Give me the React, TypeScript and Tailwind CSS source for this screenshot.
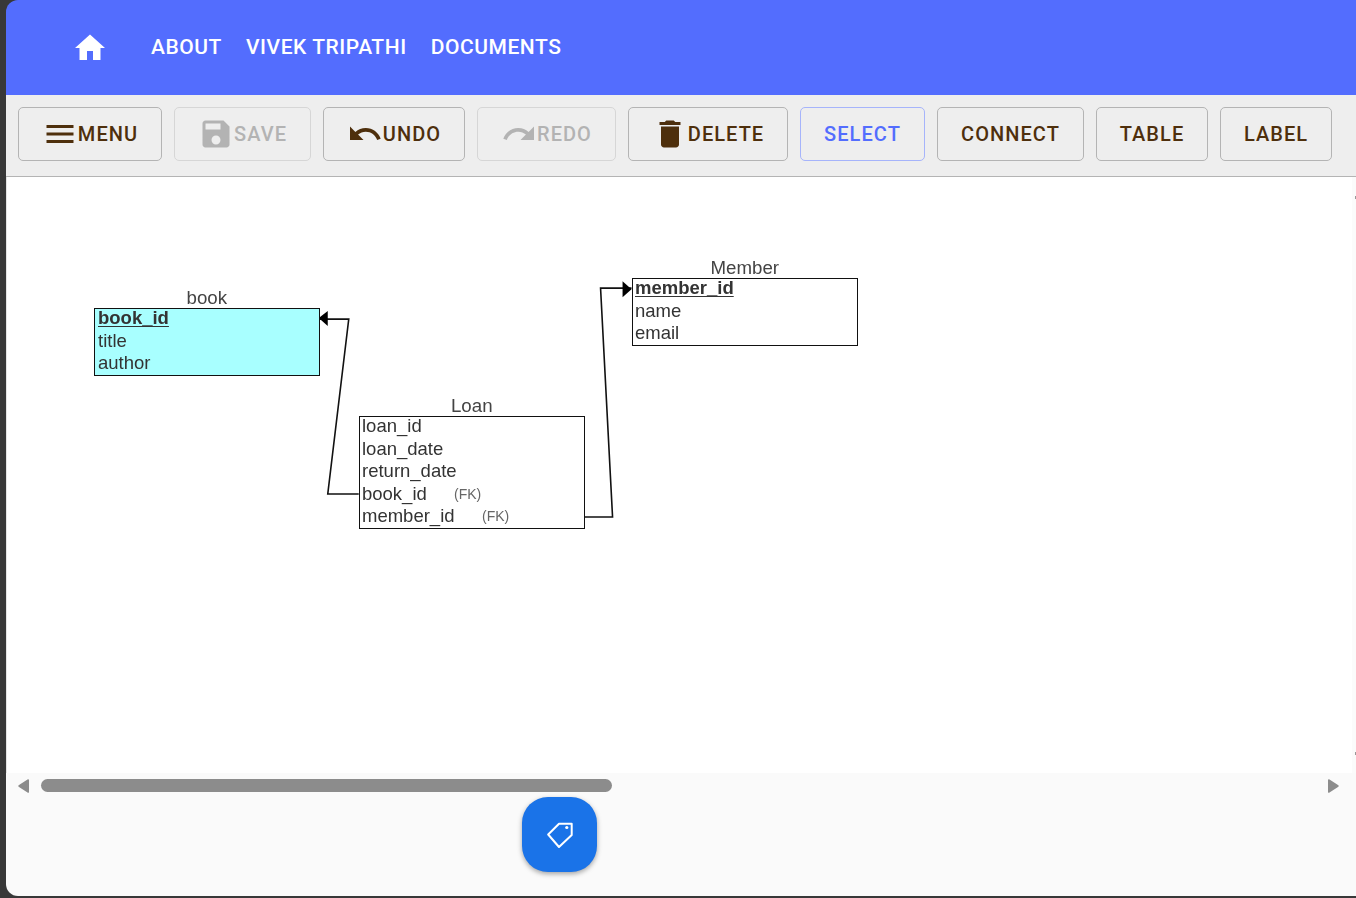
import type { ReactNode } from "react";

const ICONS = {
  menu: "M3 18h18v-2H3v2zm0-5h18v-2H3v2zm0-7v2h18V6H3z",
  save: "M17 3H5c-1.11 0-2 .9-2 2v14c0 1.1.89 2 2 2h14c1.1 0 2-.9 2-2V7l-4-4zm-5 16c-1.66 0-3-1.34-3-3s1.34-3 3-3 3 1.34 3 3-1.34 3-3 3zm3-10H5V5h10v4z",
  undo: "M12.5 8c-2.65 0-5.05.99-6.9 2.6L2 7v9h9l-3.62-3.62c1.39-1.16 3.16-1.88 5.12-1.88 3.54 0 6.55 2.31 7.6 5.5l2.37-.78C21.08 11.03 17.15 8 12.5 8z",
  redo: "M18.4 10.6C16.55 8.99 14.15 8 11.5 8c-4.65 0-8.58 3.03-9.96 7.22L3.9 16c1.05-3.19 4.05-5.5 7.6-5.5 1.95 0 3.73.72 5.12 1.88L13 16h9V7l-3.6 3.6z",
  trash: "M6 19c0 1.1.9 2 2 2h8c1.1 0 2-.9 2-2V7H6v12zM19 4h-3.5l-1-1h-5l-1 1H5v2h14V4z",
  home: "M10 20v-6h4v6h5v-8h3L12 3 2 12h3v8z",
};

function Icon({ d }: { d: string }) {
  return (
    <svg viewBox="0 0 24 24" className="h-9 w-9 shrink-0 fill-current">
      <path d={d} />
    </svg>
  );
}

function ToolButton({
  icon,
  children,
  width,
  disabled,
  active,
}: {
  icon?: string;
  children: ReactNode;
  width: string;
  disabled?: boolean;
  active?: boolean;
}) {
  let tone = "border-[#b4b4b4] text-[#4e2f0c]";
  if (disabled) tone = "border-[#d6d6d6] text-[#b3b3b3]";
  if (active) tone = "border-[#a6b4fb] text-[#536dfe]";
  return (
    <button
      type="button"
      className={`flex h-[54px] items-center justify-center rounded-[5px] border text-[20px] leading-none font-medium tracking-[1.05px] ${width} ${tone}`}
    >
      {icon && <Icon d={icon} />}
      <span>{children}</span>
    </button>
  );
}

function DbTable({
  name,
  rows,
  left,
  top,
  fill,
  pad,
}: {
  name: string;
  rows: { label: string; pk?: boolean; fk?: number }[];
  left: string;
  top: string;
  fill?: string;
  pad?: string;
}) {
  return (
    <div className={`absolute w-[225.5px] ${left} ${top}`}>
      <div className="h-[21px] text-center text-[18.7px] leading-[21px] text-[#444]">{name}</div>
      <div className={`outline-[1.5px] -outline-offset-[1.5px] outline-[#111] outline-solid ${pad ?? "pl-[3px]"} ${fill ?? "bg-white"}`}>
        {rows.map((row) => (
          <div key={row.label} className="relative h-[22.5px] text-[18.5px] leading-[19.5px] text-[#333]">
            <span className={row.pk ? "font-bold underline underline-offset-2" : ""}>{row.label}</span>
            {row.fk && (
              <span className="absolute top-0 text-[14px] leading-[20px] text-[#666]" style={{ left: row.fk }}>
                (FK)
              </span>
            )}
          </div>
        ))}
      </div>
    </div>
  );
}

export default function App() {
  return (
    <div className="h-[898px] w-[1356px] overflow-hidden bg-[#383838] pb-[2px] pl-[6px] font-['Roboto',sans-serif]">
      <div className="flex h-full flex-col overflow-hidden rounded-l-[12px]">
        <header className="flex h-[95px] shrink-0 items-center bg-[#536dfe] pl-[66px] text-white">
          <Icon d={ICONS.home} />
          <nav className="ml-[43px] flex gap-[24px] text-[21px] font-medium tracking-[0.55px]">
            <span>ABOUT</span>
            <span>VIVEK TRIPATHI</span>
            <span>DOCUMENTS</span>
          </nav>
        </header>

        <div className="flex h-[82px] shrink-0 items-start gap-3 border-b border-[#b4b4b4] bg-[#eee] pt-3 pl-3">
          <ToolButton width="w-[144px]" icon={ICONS.menu}>MENU</ToolButton>
          <ToolButton width="w-[137px]" icon={ICONS.save} disabled>SAVE</ToolButton>
          <ToolButton width="w-[142px]" icon={ICONS.undo}>UNDO</ToolButton>
          <ToolButton width="w-[139px]" icon={ICONS.redo} disabled>REDO</ToolButton>
          <ToolButton width="w-[160px]" icon={ICONS.trash}>DELETE</ToolButton>
          <ToolButton width="w-[125px]" active>SELECT</ToolButton>
          <ToolButton width="w-[147px]">CONNECT</ToolButton>
          <ToolButton width="w-[112px]">TABLE</ToolButton>
          <ToolButton width="w-[112px]">LABEL</ToolButton>
        </div>

        <div className="relative flex h-[596px] shrink-0 bg-[#fbfbfb]">
          <main className="relative w-[1346px] border-l border-[#e4e4e4] bg-white font-['Liberation_Sans',sans-serif]">
            <div className="absolute inset-0 blur-[0.45px]">
              <svg className="absolute inset-0 h-full w-full" viewBox="0 0 1346 596">
                <path d="M352 317H321L342 142H313" fill="none" stroke="#111" strokeWidth="1.6" />
                <path d="M577 340H606L594 111H625" fill="none" stroke="#111" strokeWidth="1.6" />
                <path d="M312 141L321 134V149Z" fill="#000" />
                <path d="M625 112L616 104V120Z" fill="#000" />
              </svg>
              <DbTable
                name="book"
                left="left-[87px]"
                top="top-[110px]"
                fill="bg-[#a8ffff]"
                pad="pl-[4px]"
                rows={[{ label: "book_id", pk: true }, { label: "title" }, { label: "author" }]}
              />
              <DbTable
                name="Loan"
                left="left-[352px]"
                top="top-[218px]"
                rows={[
                  { label: "loan_id" },
                  { label: "loan_date" },
                  { label: "return_date" },
                  { label: "book_id", fk: 92 },
                  { label: "member_id", fk: 120 },
                ]}
              />
              <DbTable
                name="Member"
                left="left-[625px]"
                top="top-[80px]"
                rows={[{ label: "member_id", pk: true }, { label: "name" }, { label: "email" }]}
              />
            </div>
          </main>
          <span className="absolute top-[19px] right-0 h-[3px] w-px bg-[#999]" />
          <span className="absolute top-[575px] right-0 h-[3px] w-px bg-[#999]" />
        </div>

        <footer className="min-h-0 flex-1 bg-[#fafafa]">
          <div className="flex h-6 items-center pr-[17px] pl-3">
            <svg viewBox="0 0 11 14" className="mt-px h-[14px] w-[11px] fill-[#8c8c8c]">
              <path d="M11 1V13C11 14 10 14 9.5 13.5L1 8C0 7.3 0 6.7 1 6L9.5.5C10 0 11 0 11 1Z" />
            </svg>
            <div className="ml-3 h-[13px] w-[571px] rounded-full bg-[#8c8c8c]" />
            <svg viewBox="0 0 11 14" className="mt-px ml-auto h-[14px] w-[11px] fill-[#8c8c8c]">
              <path d="M0 1V13C0 14 1 14 1.5 13.5L10 8C11 7.3 11 6.7 10 6L1.5.5C1 0 0 0 0 1Z" />
            </svg>
          </div>
          <button
            type="button"
            className="ml-[516px] flex h-[75px] w-[75px] items-center justify-center rounded-[26px] bg-[#1a73e8] shadow-[0_2px_5px_rgba(0,0,0,0.35)]"
          >
            <svg viewBox="0 0 26 26" className="h-[26px] w-[26px]" fill="none" stroke="#fff" strokeWidth="2" strokeLinejoin="round">
              <path d="M12 1.8H24.7V13L12 25L1.2 12.5Z" />
              <circle cx="19.8" cy="5.5" r="1.6" fill="#fff" stroke="none" />
            </svg>
          </button>
        </footer>
      </div>
    </div>
  );
}
